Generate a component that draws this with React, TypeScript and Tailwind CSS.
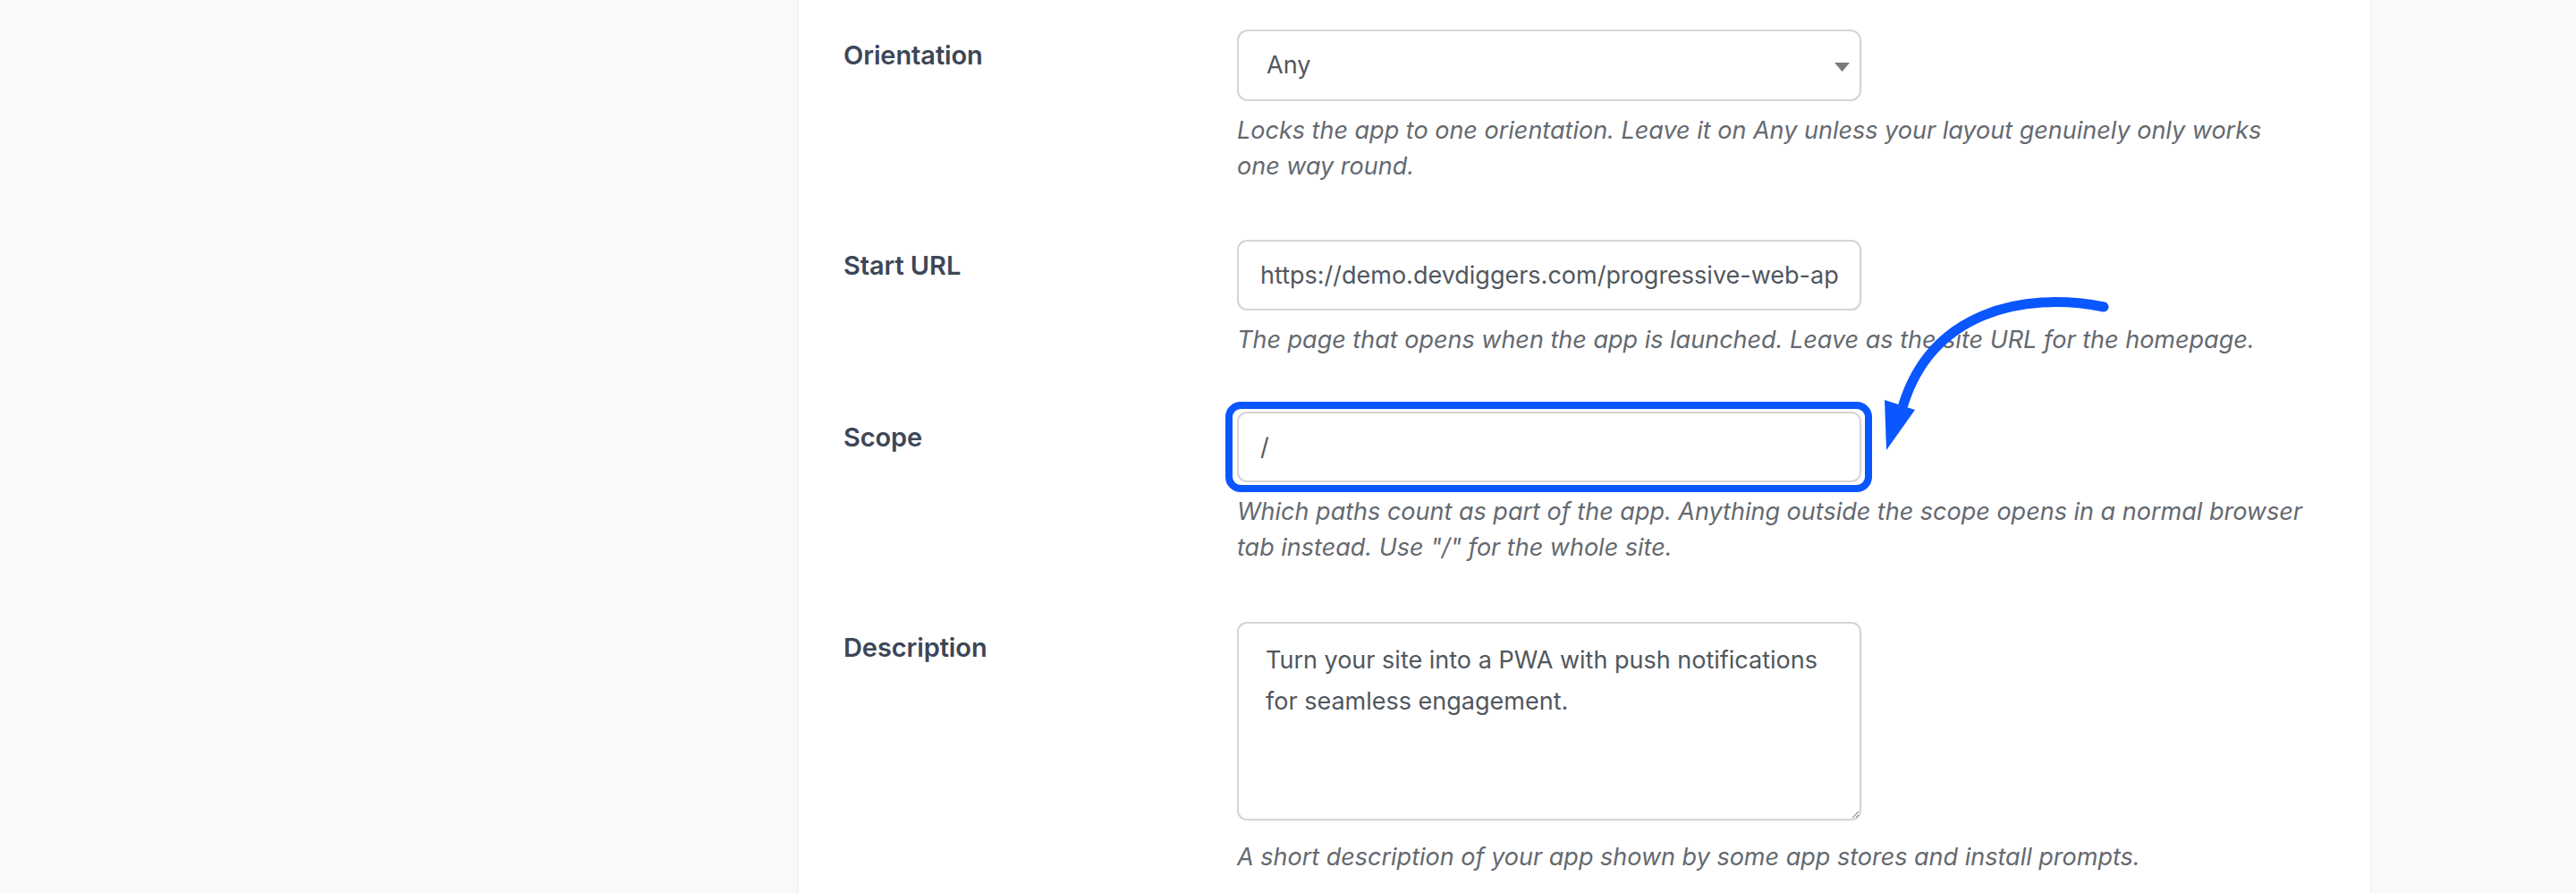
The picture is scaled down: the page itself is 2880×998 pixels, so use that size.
import React from "react";

const labelCls =
  "pt-[9px] text-[29px] leading-[40px] font-semibold text-[#3d4657] tracking-[-0.1px]";
const helpBase =
  "text-[27px] leading-[40px] italic text-[#646970] w-[1196px]";
const inputCls =
  "block w-[698px] h-[79px] rounded-[11px] border-2 border-[#d4d4d4] bg-white px-[24px] text-[27px] text-[#50575e] outline-none";

export default function App() {
  return (
    <div className="relative w-[2880px] h-[998px] overflow-hidden bg-[#f8f9fa] font-['Inter',sans-serif]">
      <div className="ml-[891px] w-[1761px] h-full bg-white border-x-2 border-[#f1f2f4] pl-[50px] pr-[50px] pt-[33px]">
        {/* Orientation */}
        <div className="grid grid-cols-[440px_1fr] pb-[62px]">
          <div className={labelCls}>Orientation</div>
          <div>
            <div className="relative w-[698px]">
              <select
                defaultValue="any"
                className="block w-[698px] h-[80px] appearance-none rounded-[12px] border-2 border-[#d4d4d4] bg-white pl-[31px] pr-[50px] text-[27px] text-[#50575e] outline-none"
              >
                <option value="any">Any</option>
                <option value="portrait">Portrait</option>
                <option value="landscape">Landscape</option>
              </select>
              <svg
                className="pointer-events-none absolute right-[13px] top-[37px]"
                width="17"
                height="10"
                viewBox="0 0 17 10"
              >
                <polygon points="0,0 17,0 8.5,10" fill="#7b7b7b" />
              </svg>
            </div>
            <p className={`mt-[13px] ${helpBase}`}>
              Locks the app to one orientation. Leave it on Any unless your layout genuinely only works one way round.
            </p>
          </div>
        </div>

        {/* Start URL */}
        <div className="grid grid-cols-[440px_1fr] pb-[60px]">
          <div className={labelCls}>Start URL</div>
          <div>
            <input
              readOnly
              value="https://demo.devdiggers.com/progressive-web-app/"
              className={inputCls}
            />
            <p className={`mt-[13px] ${helpBase}`}>
              The page that opens when the app is launched. Leave as the site URL for the homepage.
            </p>
          </div>
        </div>

        {/* Scope */}
        <div className="grid grid-cols-[440px_1fr] pb-[63px]">
          <div className={labelCls}>Scope</div>
          <div>
            <div className="relative w-[698px]">
              <input readOnly value="/" className={inputCls} />
              <div className="pointer-events-none absolute -left-[13px] -right-[12px] -top-[11px] -bottom-[11px] rounded-[17px] border-[8px] border-[#0a56ff]" />
            </div>
            <p className={`mt-[13px] ${helpBase}`}>
              Which paths count as part of the app. Anything outside the scope opens in a normal browser tab instead. Use "/" for the whole site.
            </p>
          </div>
        </div>

        {/* Description */}
        <div className="grid grid-cols-[440px_1fr]">
          <div className={labelCls}>Description</div>
          <div>
            <textarea
              readOnly
              defaultValue="Turn your site into a PWA with push notifications for seamless engagement."
              className="block w-[698px] h-[222px] rounded-[11px] border-2 border-[#d4d4d4] bg-white px-[30px] pt-[18px] text-[27px] leading-[46px] text-[#50575e] outline-none"
            />
            <p className={`mt-[21px] ${helpBase}`}>
              A short description of your app shown by some app stores and install prompts.
            </p>
          </div>
        </div>
      </div>

      {/* annotation arrow */}
      <svg
        className="pointer-events-none absolute left-[2080px] top-[310px]"
        width="300"
        height="210"
        viewBox="0 0 300 210"
      >
        <path
          d="M272,33 C180,15 80,40 48,142"
          fill="none"
          stroke="#0a56ff"
          strokeWidth="11"
          strokeLinecap="round"
        />
        <polygon points="27,137 61,148 29,193" fill="#0a56ff" />
      </svg>
    </div>
  );
}
